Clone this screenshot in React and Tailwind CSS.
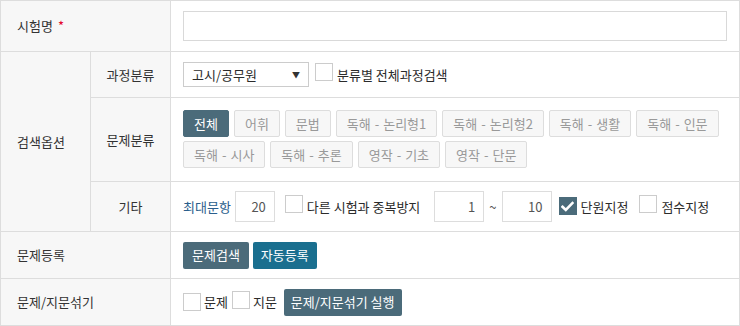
import React from 'react'

const font = { fontFamily: '"Noto Sans CJK KR", "Noto Sans", sans-serif' }

const Check = ({ checked }) => (
  <span
    className={`inline-flex h-[18px] w-[18px] shrink-0 items-center justify-center border ${
      checked ? 'border-[#4b6b7a] bg-[#4b6b7a]' : 'border-[#cccccc] bg-white'
    }`}
  >
    {checked && (
      <svg width="13" height="11" viewBox="0 0 13 11">
        <path d="M1.5 5.8 L4.8 9 L11.5 2" fill="none" stroke="white" strokeWidth="2.6" strokeLinecap="square" />
      </svg>
    )}
  </span>
)

const Chip = ({ active, children }) => {
  const parts = children.split(' - ')
  return (
    <span
      className={`inline-flex h-[27px] items-center rounded-[2px] border px-[10px] ${
        active ? 'border-[#4b6b7a] bg-[#4b6b7a] text-white' : 'border-[#dddddd] bg-[#f7f7f7] text-[#999999]'
      }`}
    >
      {parts.length === 2 ? (
        <>
          {parts[0]}
          <span className="px-[4px]">-</span>
          {parts[1]}
        </>
      ) : (
        children
      )}
    </span>
  )
}

const Btn = ({ color, className = 'px-[9px]', children }) => (
  <span className={`inline-flex h-[27px] items-center rounded-[2px] text-white ${color} ${className}`}>{children}</span>
)

const Label = ({ children, className = '' }) => (
  <div className={`flex items-center bg-[#f7f7f7] text-[#333333] ${className}`}>{children}</div>
)

const chips = [
  '전체', '어휘', '문법', '독해 - 논리형1', '독해 - 논리형2', '독해 - 생활', '독해 - 인문',
  '독해 - 시사', '독해 - 추론', '영작 - 기초', '영작 - 단문'
]

export default function App() {
  return (
    <div className="w-[740px] border border-[#dddddd] bg-white text-[13px] text-[#2b2b2b]" style={font}>
      {/* 시험명 */}
      <div className="flex h-[51px] border-b border-[#dddddd]">
        <Label className="w-[170px] border-r border-[#dddddd] pl-4">
          시험명 <span className="ml-[5px] text-[#e4002b]">*</span>
        </Label>
        <div className="flex flex-1 items-center px-3">
          <div className="h-[30px] w-full border border-[#d9d9d9] bg-white" />
        </div>
      </div>

      {/* 검색옵션 */}
      <div className="flex border-b border-[#dddddd]">
        <Label className="w-[90px] border-r border-[#dddddd] pl-4">검색옵션</Label>
        <div className="flex flex-1 flex-col">
          <div className="flex h-[46px] border-b border-[#dddddd]">
            <Label className="w-[80px] justify-center border-r border-[#dddddd]">과정분류</Label>
            <div className="flex flex-1 items-center px-3">
              <div className="flex h-[25px] w-[126px] items-center justify-between border border-[#cccccc] bg-white pl-[8px] pr-[8px]">
                <span>고시/공무원</span>
                <span className="text-[8px] text-[#333333]">▼</span>
              </div>
              <span className="ml-[6px]"><Check /></span>
              <span className="ml-[4px]">분류별 전체과정검색</span>
            </div>
          </div>

          <div className="flex h-[84px] border-b border-[#dddddd]">
            <Label className="w-[80px] justify-center border-r border-[#dddddd]">문제분류</Label>
            <div className="flex flex-1 flex-wrap content-start gap-x-[5px] gap-y-[4px] px-3 pt-3">
              {chips.map((c, i) => (
                <Chip key={c} active={i === 0}>{c}</Chip>
              ))}
            </div>
          </div>

          <div className="flex h-[49px]">
            <Label className="w-[80px] justify-center border-r border-[#dddddd]">기타</Label>
            <div className="flex flex-1 items-center px-3">
              <span className="text-[#2a5e8c]">최대문항</span>
              <span className="ml-[4px] flex h-[31px] w-[40px] items-center justify-end border border-[#dddddd] pr-[8px] text-[#555555]">20</span>
              <span className="ml-[10px]"><Check /></span>
              <span className="ml-[4px]">다른 시험과 중복방지</span>
              <span className="ml-[14px] flex h-[31px] w-[50px] items-center justify-end border border-[#dddddd] pr-[8px] text-[#555555]">1</span>
              <span className="mx-[5px] text-[#555555]">~</span>
              <span className="flex h-[31px] w-[50px] items-center justify-end border border-[#dddddd] pr-[8px] text-[#555555]">10</span>
              <span className="ml-[7px]"><Check checked /></span>
              <span className="ml-[4px]">단원지정</span>
              <span className="ml-[11px]"><Check /></span>
              <span className="ml-[4px]">점수지정</span>
            </div>
          </div>
        </div>
      </div>

      {/* 문제등록 */}
      <div className="flex h-[47px] border-b border-[#dddddd]">
        <Label className="w-[170px] border-r border-[#dddddd] pl-4">문제등록</Label>
        <div className="flex flex-1 items-center gap-[4px] px-3">
          <Btn color="bg-[#4b6b7a]">문제검색</Btn>
          <Btn color="bg-[#1a6f8f]" className="px-[8px]">자동등록</Btn>
        </div>
      </div>

      {/* 문제/지문섞기 */}
      <div className="flex h-[46px]">
        <Label className="w-[170px] border-r border-[#dddddd] pl-4">문제/지문섞기</Label>
        <div className="flex flex-1 items-center px-3">
          <Check />
          <span className="ml-[3px]">문제</span>
          <span className="ml-[4px]"><Check /></span>
          <span className="ml-[3px]">지문</span>
          <span className="ml-[7px]"><Btn color="bg-[#4b6b7a]" className="px-[7px]">문제/지문섞기 실행</Btn></span>
        </div>
      </div>
    </div>
  )
}
